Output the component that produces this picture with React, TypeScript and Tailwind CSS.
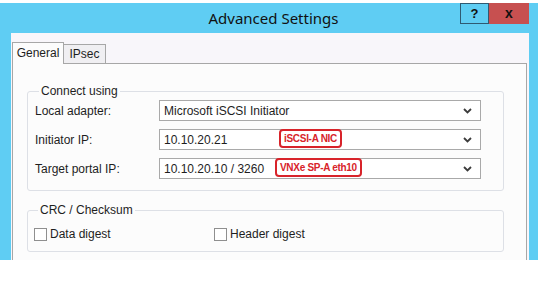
import React from 'react';

function Chevron() {
  return (
    <svg width="9" height="6" viewBox="0 0 9 6" className="shrink-0">
      <path d="M1 1 L4.5 4.5 L8 1" fill="none" stroke="#3c3c3c" strokeWidth="1.8" />
    </svg>
  );
}

function Combo({ value, note, noteLeft }: { value: string; note?: string; noteLeft?: string }) {
  return (
    <div className="relative w-[322px] h-[21px] border border-[#a9a9a9] bg-white flex items-center pl-[4px] pr-[8px]">
      <span className="whitespace-nowrap">{value}</span>
      <div className="flex-1" />
      <Chevron />
      {note && (
        // red annotation drawn over the field
        <span className={`absolute top-[-1px] ${noteLeft} px-[3px] h-[19px] flex items-center rounded-[4px] border-2 border-[#d8232a] bg-white text-[#d8232a] font-bold text-[10px] tracking-[-0.3px] leading-none whitespace-nowrap`}>
          {note}
        </span>
      )}
    </div>
  );
}

function Row({ label, value, note, noteLeft }: { label: string; value: string; note?: string; noteLeft?: string }) {
  return (
    <div className="flex items-center">
      <span className="w-[124px]">{label}</span>
      <Combo value={value} note={note} noteLeft={noteLeft} />
    </div>
  );
}

function Check({ label }: { label: string }) {
  return (
    <label className="flex items-center gap-[3px]">
      <span className="w-[13px] h-[13px] border border-[#8f8f8f] bg-white" />
      <span>{label}</span>
    </label>
  );
}

export default function App() {
  return (
    <div className="w-[538px] h-[282px] bg-white overflow-hidden text-[12px] text-[#1e1e1e]" style={{ fontFamily: '"Liberation Sans", Arial, sans-serif' }}>
      <div className="mt-[3px] h-[257px] bg-[#5fcdf3] flex flex-col pl-[11px] pr-[9px]">
        {/* title bar */}
        <div className="h-[30px] flex items-start shrink-0">
          <div className="flex-1 h-[30px] flex items-center justify-center pl-[76px] text-[15px] text-[#111]" style={{ fontFamily: '"Noto Sans", sans-serif' }}>
            Advanced Settings
          </div>
          <div className="flex h-[21px]">
            <div className="w-[29px] border border-[#2f5a72] flex items-center justify-center font-bold text-[13px] text-[#111]">?</div>
            <div className="w-[40px] bg-[#c75050] flex items-center justify-center font-bold text-[14px] text-[#111]">x</div>
          </div>
        </div>
        {/* client */}
        <div className="flex-1 bg-[#f8f6fa] pl-[1px] pr-[2px] pt-[8px] flex flex-col">
          {/* tabs */}
          <div className="flex items-end h-[22px] shrink-0">
            <div className="w-[52px] h-[22px] bg-[#fcfcfc] border border-b-0 border-[#a7a7a7] flex items-center justify-center relative z-10 -mb-px pb-[1px]">General</div>
            <div className="w-[42px] h-[19px] bg-[#f0eff2] border border-l-0 border-b-0 border-[#a7a7a7] flex items-center justify-center">IPsec</div>
          </div>
          <div className="flex-1 bg-[#fcfcfc] border border-b-0 border-[#a7a7a7] pl-[14px] pr-[22px] pt-[19px]">
            <fieldset className="border border-[#dde0e6] rounded-[3px] h-[108px] pl-[7px] pt-[1px]">
              <legend className="ml-[4px] px-[2px] leading-[16px]">Connect using</legend>
              <div className="flex flex-col gap-[8px]">
                <Row label="Local adapter:" value="Microsoft iSCSI Initiator" />
                <Row label="Initiator IP:" value="10.10.20.21" note="iSCSI-A NIC" noteLeft="left-[119px]" />
                <Row label="Target portal IP:" value="10.10.20.10 / 3260" note="VNXe SP-A eth10" noteLeft="left-[115px]" />
              </div>
            </fieldset>
            <fieldset className="mt-[11px] border border-[#dde0e6] rounded-[3px] h-[50px] pl-[6px] pt-[7px]">
              <legend className="ml-[4px] px-[2px] leading-[16px]">CRC / Checksum</legend>
              <div className="flex">
                <div className="w-[180px]"><Check label="Data digest" /></div>
                <Check label="Header digest" />
              </div>
            </fieldset>
          </div>
        </div>
      </div>
    </div>
  );
}
